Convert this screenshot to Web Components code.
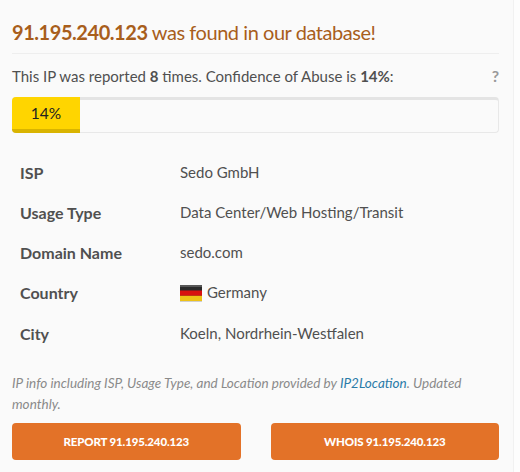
<!DOCTYPE html>
<html>
<head>
<meta charset="utf-8">
<title>IP report</title>
<style>
html, body { margin: 0; padding: 0; background: #fdfdfd; }
body { font-family: Lato, "Noto Sans", sans-serif; color: #505050; }
</style>
</head>
<body>
<ip-report>
  <span slot="ip">91.195.240.123</span>
  <ip-row label="ISP">Sedo GmbH</ip-row>
  <ip-row label="Usage Type">Data Center/Web Hosting/Transit</ip-row>
  <ip-row label="Domain Name">sedo.com</ip-row>
  <ip-row label="Country"><de-flag></de-flag><span>Germany</span></ip-row>
  <ip-row label="City" last>Koeln, Nordrhein-Westfalen</ip-row>
</ip-report>
<script>
const reportTemplate = document.createElement("template");
reportTemplate.innerHTML = `
<style>
  :host {
    display: block;
    width: 514px;
    height: 472px;
    box-sizing: border-box;
    padding: 18px 14px 0 12px;
    background: #fafafa;
    border-right: 1px solid #f1f1f1;
    overflow: hidden;
  }
  h3 {
    margin: 0;
    padding-bottom: 7px;
    font-size: 20px;
    line-height: 28px;
    font-weight: 400;
    letter-spacing: -.45px;
    color: #a85e1c;
    border-bottom: 1px solid #eeeeee;
    white-space: nowrap;
  }
  h3 b { font-weight: 700; }
  .summary {
    display: flex;
    justify-content: space-between;
    margin-top: 12px;
    font-size: 15px;
    line-height: 20px;
    white-space: nowrap;
  }
  .help { font-size: 16px; font-weight: 700; color: #999; }
  .bar {
    margin-top: 11px;
    height: 36px;
    box-sizing: border-box;
    background: #fafafa;
    border: 1px solid #e8e8e8;
    border-top: 3px solid #e4e4e4;
    border-radius: 4px;
    position: relative;
  }
  .fill {
    position: absolute;
    left: -1px;
    top: -3px;
    bottom: -1px;
    width: 68px;
    background: #ffd500;
    border-bottom: 4px solid #d9b400;
    border-radius: 4px 0 0 4px;
    box-sizing: border-box;
    color: #222;
    font-size: 15.5px;
    line-height: 32px;
    text-align: center;
  }
  .rows { margin: 19px 0 0 8px; }
  .note {
    margin-top: 19px;
    font-size: 13.5px;
    line-height: 21px;
    font-style: italic;
    color: #8a8a8a;
    white-space: nowrap;
  }
  .note a { color: #2a7ba8; text-decoration: none; }
  .actions {
    display: flex;
    gap: 30px;
    margin-top: 8px;
  }
  .actions action-button { flex: 1; }
</style>
<h3><b><slot name="ip"></slot></b> was found in our database!</h3>
<div class="summary">
  <span>This IP was reported <b>8</b> times. Confidence of Abuse is <b>14%</b>:</span>
  <span class="help">?</span>
</div>
<div class="bar"><div class="fill">14%</div></div>
<div class="rows"><slot></slot></div>
<div class="note"><div><span>IP info including ISP, Usage Type, and Location provided by </span><a href="#">IP2Location</a><span>. Updated</span></div><div>monthly.</div></div>
<div class="actions">
  <action-button>REPORT 91.195.240.123</action-button>
  <action-button>WHOIS 91.195.240.123</action-button>
</div>
`;
class IpReport extends HTMLElement {
  constructor() {
    super();
    this.attachShadow({ mode: "open" });
    this.shadowRoot.appendChild(reportTemplate.content.cloneNode(true));
  }
}

const rowTemplate = document.createElement("template");
rowTemplate.innerHTML = `
<style>
  :host {
    display: grid;
    grid-template-columns: 160px 1fr;
    align-items: center;
    height: 40px;
    font-size: 15px;
  }
  :host([last]) { height: 42px; }
  .label { font-size: 16px; font-weight: 700; }
  .value { display: flex; align-items: center; gap: 5px; white-space: nowrap; }
</style>
<div class="label"></div>
<div class="value"><slot></slot></div>
`;
class IpRow extends HTMLElement {
  constructor() {
    super();
    this.attachShadow({ mode: "open" });
    this.shadowRoot.appendChild(rowTemplate.content.cloneNode(true));
  }
  connectedCallback() {
    this.shadowRoot.querySelector(".label").textContent = this.getAttribute("label");
  }
}

const flagTemplate = document.createElement("template");
flagTemplate.innerHTML = `
<style>
  :host { display: inline-block; width: 22px; height: 17px; line-height: 0; margin-top: 2px; }
</style>
<svg width="22" height="17" viewBox="0 0 22 17">
  <rect width="22" height="16" fill="#2a2a2a"/>
  <rect y="5.5" width="22" height="5.3" fill="#d8100f"/>
  <rect y="10.8" width="22" height="5.2" fill="#eec217"/>
  <rect width="22" height="2" fill="#777" opacity=".6"/>
  <rect y="16" width="22" height="1" fill="#bbb" opacity=".7"/>
</svg>
`;
class DeFlag extends HTMLElement {
  constructor() {
    super();
    this.attachShadow({ mode: "open" });
    this.shadowRoot.appendChild(flagTemplate.content.cloneNode(true));
  }
}

const buttonTemplate = document.createElement("template");
buttonTemplate.innerHTML = `
<style>
  :host {
    display: flex;
    align-items: center;
    justify-content: center;
    height: 37px;
    background: #e37228;
    border-radius: 4px;
    color: #fff;
    font-size: 11.5px;
    font-weight: 900;
    letter-spacing: -.15px;
    white-space: nowrap;
  }
</style>
<slot></slot>
`;
class ActionButton extends HTMLElement {
  constructor() {
    super();
    this.attachShadow({ mode: "open" });
    this.shadowRoot.appendChild(buttonTemplate.content.cloneNode(true));
  }
}

window.customElements.define("ip-report", IpReport);
window.customElements.define("ip-row", IpRow);
window.customElements.define("de-flag", DeFlag);
window.customElements.define("action-button", ActionButton);
</script>
</body>
</html>
